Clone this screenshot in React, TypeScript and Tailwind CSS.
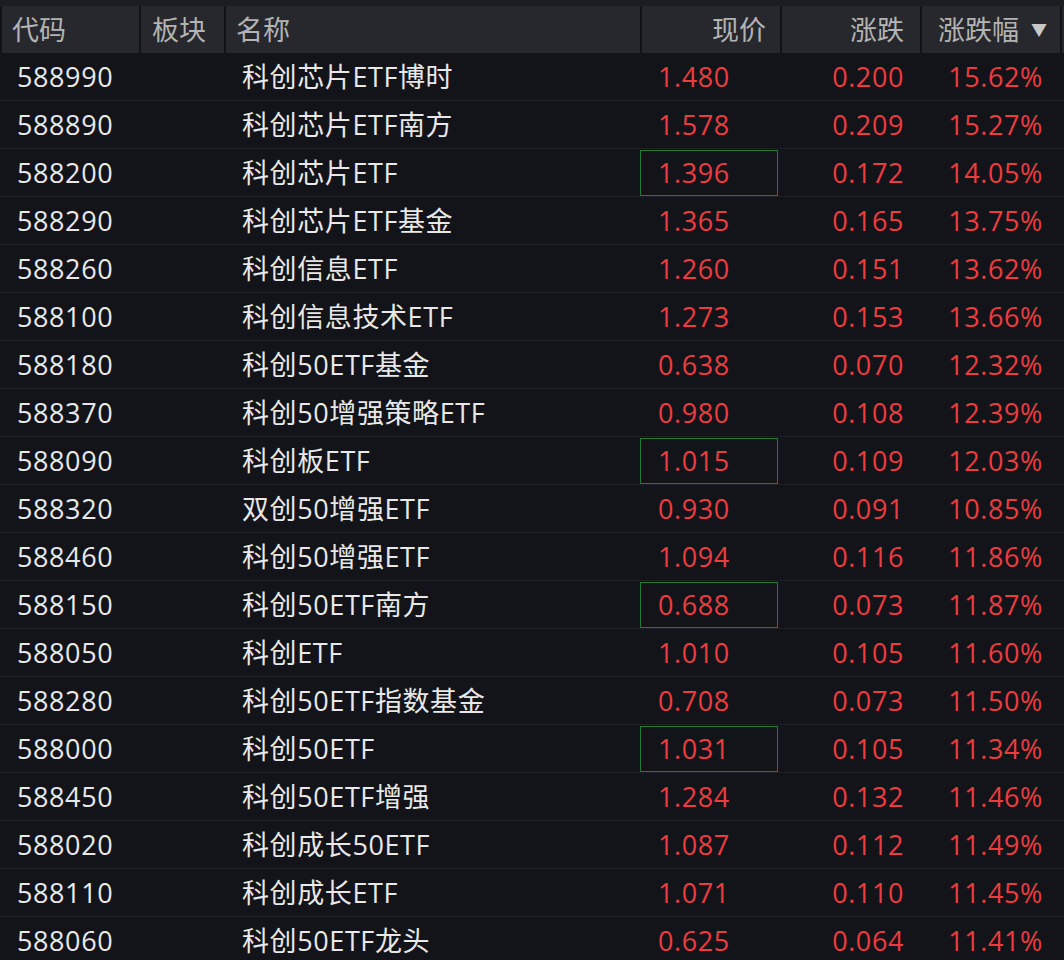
const rows: [string,string,string,string,string,boolean][] = [
["588990","科创芯片ETF博时","1.480","0.200","15.62%",false],
["588890","科创芯片ETF南方","1.578","0.209","15.27%",false],
["588200","科创芯片ETF","1.396","0.172","14.05%",true],
["588290","科创芯片ETF基金","1.365","0.165","13.75%",false],
["588260","科创信息ETF","1.260","0.151","13.62%",false],
["588100","科创信息技术ETF","1.273","0.153","13.66%",false],
["588180","科创50ETF基金","0.638","0.070","12.32%",false],
["588370","科创50增强策略ETF","0.980","0.108","12.39%",false],
["588090","科创板ETF","1.015","0.109","12.03%",true],
["588320","双创50增强ETF","0.930","0.091","10.85%",false],
["588460","科创50增强ETF","1.094","0.116","11.86%",false],
["588150","科创50ETF南方","0.688","0.073","11.87%",true],
["588050","科创ETF","1.010","0.105","11.60%",false],
["588280","科创50ETF指数基金","0.708","0.073","11.50%",false],
["588000","科创50ETF","1.031","0.105","11.34%",true],
["588450","科创50ETF增强","1.284","0.132","11.46%",false],
["588020","科创成长50ETF","1.087","0.112","11.49%",false],
["588110","科创成长ETF","1.071","0.110","11.45%",false],
["588060","科创50ETF龙头","0.625","0.064","11.41%",false],
];
const cols = "grid grid-cols-[139px_85px_416px_140px_140px_140px_4px]";
export default function App(){
  return (
    <div className="w-[1064px] h-[960px] overflow-hidden bg-[#131419] text-[26px] leading-none" style={{fontFamily:'"Open Sans","Noto Sans CJK SC",sans-serif'}}>
      <div className="h-[6px] bg-[#1c1d21]"/>
      <div className={`${cols} h-[47px] bg-[#27282e] text-[#b3b3b3] text-[27px]`}>
        <div className="border-l-2 border-[#121317] flex items-center pl-[10px]">代码</div>
        <div className="border-l-2 border-[#121317] flex items-center pl-[11px]">板块</div>
        <div className="border-l-2 border-[#121317] flex items-center pl-[10px]">名称</div>
        <div className="border-l-2 border-[#121317] flex items-center justify-end pr-[14px]">现价</div>
        <div className="border-l-2 border-[#121317] flex items-center justify-end pr-[16px]">涨跌</div>
        <div className="border-l-2 border-[#121317] flex items-center pl-[16px] gap-[12px]">涨跌幅<span className="text-[16px] text-[#c8c8c8]">▼</span></div>
        <div className="border-l-2 border-[#121317]"/>
      </div>
      {rows.map(r=>(
        <div key={r[0]} className={`${cols} h-[48px] border-b border-[#1f2025] text-[27px] tracking-[0.6px]`}>
          <div className="flex items-center pl-[17px] text-[#e8e8e8]">{r[0]}</div>
          <div/>
          <div className="flex items-center pl-[18px] text-[#e8e8e8]">{r[1]}</div>
          <div className="flex items-center"><div className={`flex items-center h-[46px] w-[138px] pl-[17px] text-[#ee3b3f] border ${r[5]?"border-[#1f7a3a]":"border-transparent"}`}>{r[2]}</div></div>
          <div className="flex items-center justify-end pr-[16px] text-[#ee3b3f]">{r[3]}</div>
          <div className="flex items-center justify-end pr-[17px] text-[#ee3b3f]">{r[4]}</div>
          <div/>
        </div>
      ))}
    </div>
  );
}
